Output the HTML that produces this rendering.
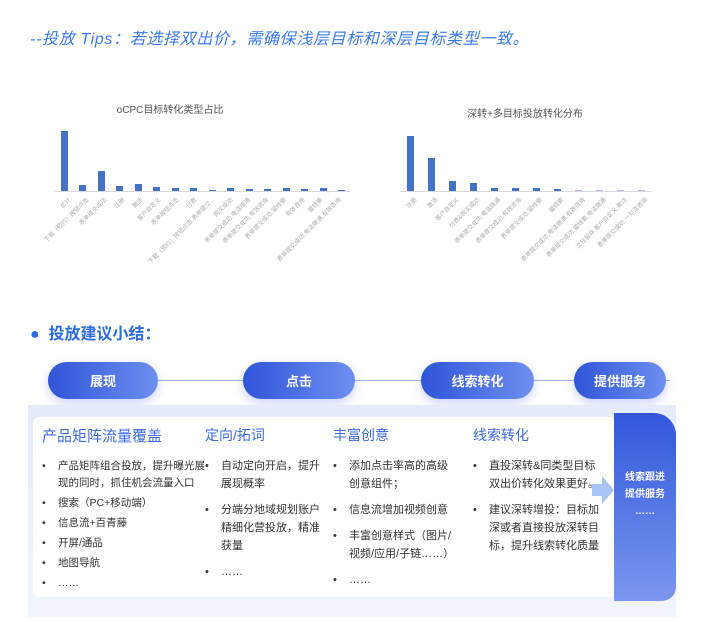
<!DOCTYPE html>
<html><head><meta charset="utf-8"><style>
*{margin:0;padding:0;box-sizing:border-box}
body{width:702px;height:621px;background:#fff;font-family:"Liberation Sans","Noto Sans CJK SC",sans-serif;position:relative;overflow:hidden;color:#333}
.abs{position:absolute}
.tip{left:30px;top:25px;font-size:16px;font-style:italic;color:#3a7bea;letter-spacing:0.65px;white-space:nowrap}
.ct{font-size:10px;color:#555;text-align:center}
.bar{position:absolute;background:#4472c4;width:7px}
.base{position:absolute;height:1px;background:#d9d9d9}
.lb{position:absolute;font-size:6px;color:#aaa;white-space:nowrap;transform-origin:right top;transform:rotate(-45deg);text-align:right}
.h2{left:30px;top:320px;font-size:16px;font-weight:bold;color:#2b6de0}
.pill{position:absolute;top:362px;height:37px;border-radius:19px;background:linear-gradient(90deg,#2f55d8,#6d8ff0);color:#fff;font-size:13px;font-weight:bold;display:flex;align-items:center;justify-content:center;box-shadow:0 4px 10px rgba(80,110,230,.3)}
.line{position:absolute;top:380px;height:1px;background:#9fb3f0}
.col{position:absolute;top:425px;font-size:11px;color:#333}
.col h3{font-size:14px;color:#3c6be0;font-weight:normal;margin-bottom:12px}
.col h3.big{font-size:15px}
.col ul{list-style:none}
.col li{position:relative;padding-left:16px;line-height:18px;margin-bottom:8px}
.col li:before{content:"•";position:absolute;left:0;top:0}
.c1{font-size:10.5px}
.c1 li{line-height:17px;margin-bottom:3px}
</style></head><body>
<div class="abs tip">--投放 Tips：若选择双出价，需确保浅层目标和深层目标类型一致。</div>

<div class="abs ct" style="left:100px;top:101px;width:140px">oCPC目标转化类型占比</div>
<div class="base" style="left:55px;top:191px;width:295px"></div>
<div class="bar" style="left:61px;top:131px;height:60px"></div>
<div class="bar" style="left:79px;top:185px;height:6px"></div>
<div class="bar" style="left:98px;top:171px;height:20px"></div>
<div class="bar" style="left:116px;top:186px;height:5px"></div>
<div class="bar" style="left:135px;top:184px;height:7px"></div>
<div class="bar" style="left:153px;top:187px;height:4px"></div>
<div class="bar" style="left:172px;top:188px;height:3px"></div>
<div class="bar" style="left:190px;top:188px;height:3px"></div>
<div class="bar" style="left:209px;top:190px;height:1px"></div>
<div class="bar" style="left:227px;top:188px;height:3px"></div>
<div class="bar" style="left:246px;top:189px;height:2px"></div>
<div class="bar" style="left:264px;top:189px;height:2px"></div>
<div class="bar" style="left:283px;top:188px;height:3px"></div>
<div class="bar" style="left:301px;top:189px;height:2px"></div>
<div class="bar" style="left:320px;top:188px;height:3px"></div>
<div class="bar" style="left:338px;top:190px;height:1px"></div>
<div class="lb" style="right:636px;top:195px">总计</div>
<div class="lb" style="right:618px;top:195px">下载（预约）按钮点击</div>
<div class="lb" style="right:600px;top:195px">表单提交成功</div>
<div class="lb" style="right:582px;top:195px">注册</div>
<div class="lb" style="right:564px;top:195px">激活</div>
<div class="lb" style="right:546px;top:195px">客户自定义</div>
<div class="lb" style="right:528px;top:195px">表单按钮点击</div>
<div class="lb" style="right:510px;top:195px">付费</div>
<div class="lb" style="right:492px;top:195px">下载（预约）按钮点击,表单提交...</div>
<div class="lb" style="right:474px;top:195px">购买成功</div>
<div class="lb" style="right:456px;top:195px">表单提交成功,电话拨通</div>
<div class="lb" style="right:438px;top:195px">表单提交成功,有效咨询</div>
<div class="lb" style="right:420px;top:195px">表单提交成功,留线索</div>
<div class="lb" style="right:402px;top:195px">有效咨询</div>
<div class="lb" style="right:384px;top:195px">留线索</div>
<div class="lb" style="right:366px;top:195px">表单提交成功,电话拨通,有效咨询</div>

<div class="abs ct" style="left:455px;top:105px;width:140px">深转+多目标投放转化分布</div>
<div class="base" style="left:400px;top:191px;width:252px"></div>
<div class="bar" style="left:407px;top:136px;height:55px"></div>
<div class="bar" style="left:428px;top:158px;height:33px"></div>
<div class="bar" style="left:449px;top:181px;height:10px"></div>
<div class="bar" style="left:470px;top:183px;height:8px"></div>
<div class="bar" style="left:491px;top:188px;height:3px"></div>
<div class="bar" style="left:512px;top:188px;height:3px"></div>
<div class="bar" style="left:533px;top:188px;height:3px"></div>
<div class="bar" style="left:554px;top:189px;height:2px"></div>
<div class="bar" style="left:575px;top:190px;height:1px;background:#a9bde6"></div>
<div class="bar" style="left:596px;top:190px;height:1px;background:#a9bde6"></div>
<div class="bar" style="left:617px;top:190px;height:1px;background:#a9bde6"></div>
<div class="bar" style="left:638px;top:190px;height:1px;background:#a9bde6"></div>
<div class="lb" style="right:290px;top:195px">注册</div>
<div class="lb" style="right:269px;top:195px">激活</div>
<div class="lb" style="right:248px;top:195px">客户自定义</div>
<div class="lb" style="right:227px;top:195px">付费&amp;购买成功</div>
<div class="lb" style="right:206px;top:195px">表单提交成功,电话拨通</div>
<div class="lb" style="right:185px;top:195px">表单提交成功,有效咨询</div>
<div class="lb" style="right:164px;top:195px">表单提交成功,留线索</div>
<div class="lb" style="right:143px;top:195px">留线索</div>
<div class="lb" style="right:122px;top:195px">表单提交成功,电话拨通,有效咨询</div>
<div class="lb" style="right:101px;top:195px">表单提交成功,留线索,电话拨通</div>
<div class="lb" style="right:80px;top:195px">次日留存,客户自定义,激活</div>
<div class="lb" style="right:59px;top:195px">表单提交成功,一句话咨询</div>

<div class="abs h2">●&nbsp; 投放建议小结：</div>

<div class="line" style="left:150px;width:520px"></div>
<div class="pill" style="left:48px;width:110px">展现</div>
<div class="pill" style="left:243px;width:112px">点击</div>
<div class="pill" style="left:421px;width:113px">线索转化</div>
<div class="pill" style="left:574px;width:92px">提供服务</div>

<div class="abs" style="left:28px;top:405px;width:648px;height:212px;background:linear-gradient(180deg,#e6ebfb,#f3f5fd)"></div>
<div class="abs" style="left:33px;top:417px;width:583px;height:180px;background:#fff;border-radius:6px"></div>
<div class="abs" style="left:614px;top:413px;width:62px;height:188px;background:linear-gradient(180deg,#3158db,#7b97ee);border-radius:0 22px 14px 0;color:#fff;font-size:10px;font-weight:bold;text-align:center;padding-top:56px;line-height:17px">线索跟进<br>提供服务<br>……</div>
<svg class="abs" style="left:592px;top:476px" width="22" height="28"><polygon points="0,8 10,8 10,0 22,14 10,28 10,20 0,20" fill="#a8c4f5"/></svg>

<div class="col c1" style="left:42px;width:165px"><h3 class="big">产品矩阵流量覆盖</h3><ul>
<li>产品矩阵组合投放，提升曝光展现的同时，抓住机会流量入口</li>
<li>搜索（PC+移动端）</li><li>信息流+百青藤</li><li>开屏/通品</li><li>地图导航</li><li>……</li></ul></div>
<div class="col" style="left:205px;width:117px"><h3>定向/拓词</h3><ul>
<li>自动定向开启，提升展现概率</li><li>分端分地域规划账户精细化营投放，精准获量</li><li>……</li></ul></div>
<div class="col" style="left:333px;width:123px"><h3>丰富创意</h3><ul>
<li>添加点击率高的高级创意组件；</li><li>信息流增加视频创意</li><li>丰富创意样式（图片/<br>视频/应用/子链……）</li><li>……</li></ul></div>
<div class="col" style="left:473px;width:128px"><h3>线索转化</h3><ul>
<li>直投深转&amp;同类型目标双出价转化效果更好。</li><li>建议深转增投：目标加深或者直接投放深转目标，提升线索转化质量</li></ul></div>
</body></html>
